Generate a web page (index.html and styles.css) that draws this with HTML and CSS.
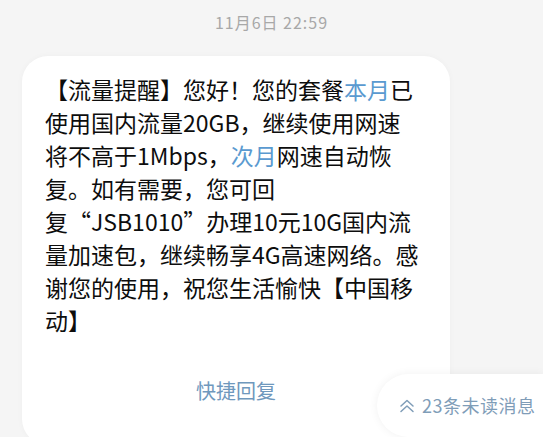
FILE: index.html
```html
<!DOCTYPE html>
<html lang="zh-CN">
<head>
    <meta charset="UTF-8">
    <meta name="viewport" content="width=device-width, initial-scale=1.0">
    <title>短信</title>
    <link rel="stylesheet" href="styles.css">
</head>
<body>

<div class="chat">
    <div class="msg-time">11月6日 22:59</div>

    <div class="bubble">
        <p class="msg-text">
            <span class="line">【流量提醒】您好！您的套餐<span class="hl">本月</span>已</span>
            <span class="line">使用国内流量20GB，继续使用网速</span>
            <span class="line">将不高于1Mbps，<span class="hl">次月</span>网速自动恢</span>
            <span class="line">复。如有需要，您可回</span>
            <span class="line">复“JSB1010”办理10元10G国内流</span>
            <span class="line">量加速包，继续畅享4G高速网络。感</span>
            <span class="line">谢您的使用，祝您生活愉快【中国移</span>
            <span class="line">动】</span>
        </p>
        <div class="quick-reply">快捷回复</div>
    </div>

    <div class="unread-pill">
        <svg class="chev" width="16" height="14" viewBox="0 0 16 14">
            <path d="M2 7 L8 1.5 L14 7 M2 12.5 L8 7 L14 12.5" fill="none" stroke="#7f9db8" stroke-width="1.5" stroke-linecap="round" stroke-linejoin="round"/>
        </svg>
        <span>23条未读消息</span>
    </div>
</div>

</body>
</html>
```

FILE: styles.css
```css
body {
    margin: 0;
    padding: 0;
    background-color: #f5f5f5;
    font-family: "Noto Sans CJK SC", "Noto Sans", sans-serif;
    overflow: hidden;
}

.chat {
    position: relative;
    height: 437px;
}

.msg-time {
    padding-top: 11px;
    text-align: center;
    font-size: 16px;
    line-height: 22px;
    letter-spacing: 1px;
    color: #a8a8a8;
}

.bubble {
    margin: 23px 0 0 22px;
    width: 428px;
    padding: 17px 0 40px 0;
    background-color: #fff;
    border-radius: 26px;
    box-shadow: 0 0 6px rgba(0, 0, 0, 0.03);
}

.msg-text {
    margin: 0;
    padding-left: 23px;
    font-size: 23px;
    line-height: 33px;
    color: #0d0d0d;
}

.msg-text .line {
    display: block;
    white-space: nowrap;
}

.hl {
    color: #5a9ad0;
}

.quick-reply {
    margin-top: 40px;
    text-align: center;
    font-size: 20px;
    line-height: 28px;
    color: #6f98bd;
}

.unread-pill {
    position: absolute;
    left: 377px;
    right: 0;
    top: 374px;
    height: 63px;
    padding: 19px 0 0 22px;
    box-sizing: border-box;
    display: flex;
    align-items: flex-start;
    gap: 7px;
    background-color: #fff;
    border-radius: 32px 0 0 32px;
    box-shadow: 0 0 10px rgba(0, 0, 0, 0.06);
    font-size: 18px;
    line-height: 24px;
    letter-spacing: 0.5px;
    color: #7f9db8;
}

.unread-pill .chev {
    margin-top: 6px;
}
```
